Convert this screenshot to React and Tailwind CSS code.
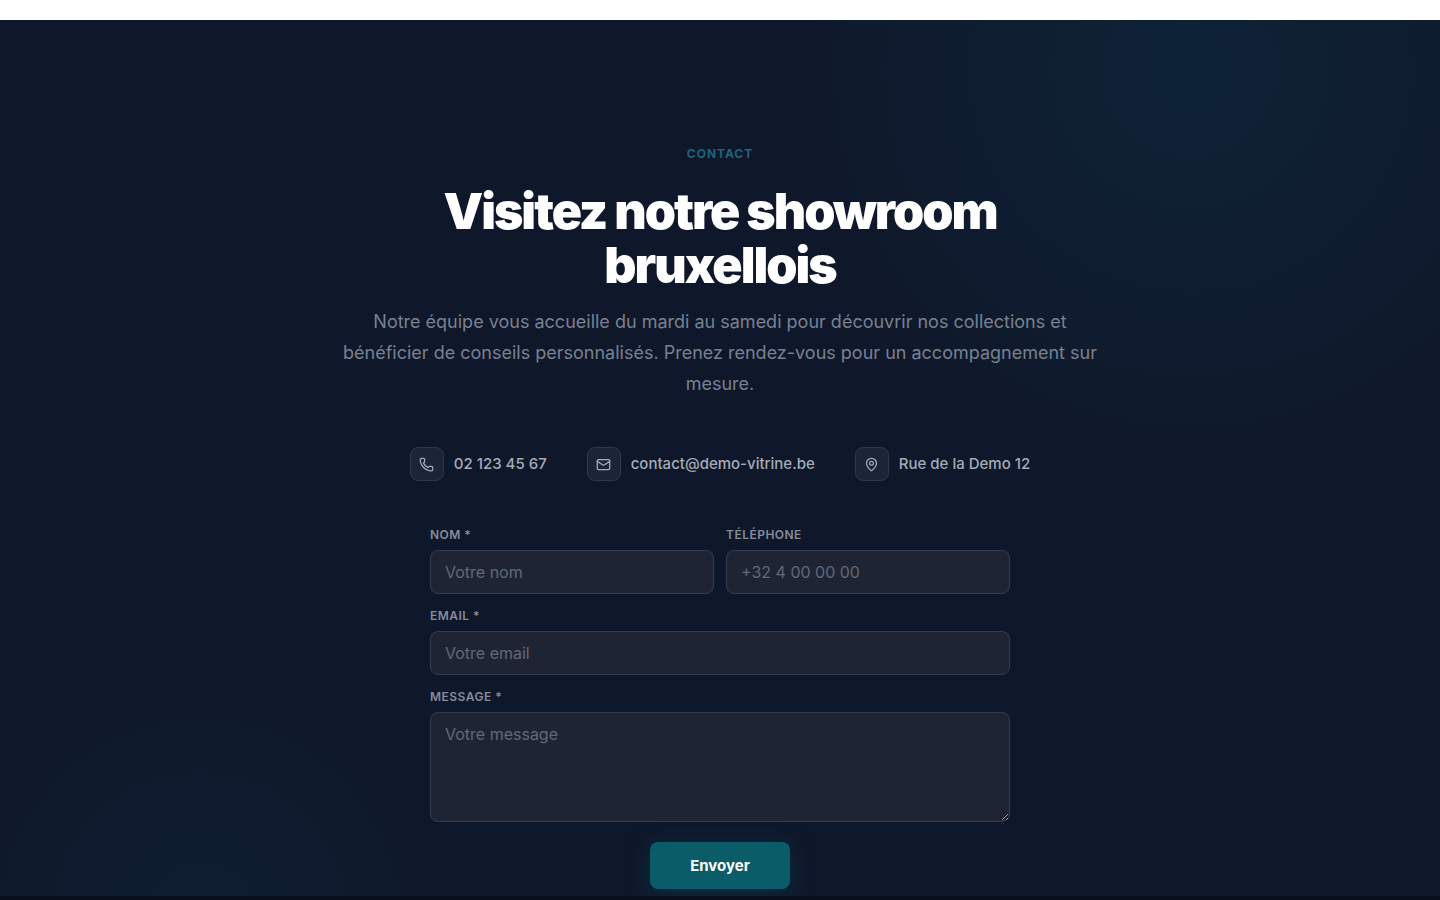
import React, { useState } from 'react';
import { Phone, Mail, MapPin } from 'lucide-react';

const contactItems = [
    { icon: Phone, label: '02 123 45 67', href: 'tel:021234567' },
    { icon: Mail, label: 'contact@demo-vitrine.be', href: 'mailto:contact@demo-vitrine.be' },
    { icon: MapPin, label: 'Rue de la Demo 12', href: '#adresse' },
];

const fieldClass =
    'block w-full rounded-lg border border-[#343d4d] bg-[#1f2435] px-3.5 text-base text-white placeholder:text-[#626877] outline-none focus:border-[#0b5c68]';

const Field = ({ id, label, children }) => (
    <div>
        <label htmlFor={id} className="block mb-1.5 text-xs leading-[19px] font-semibold tracking-[0.04em] uppercase text-[#868c99]">
            {label}
        </label>
        {children}
    </div>
);

const ContactForm = () => {
    const [form, setForm] = useState({ name: '', phone: '', email: '', message: '' });

    const handleChange = (e) => setForm({ ...form, [e.target.name]: e.target.value });

    return (
        <form onSubmit={(e) => e.preventDefault()} className="w-full max-w-[580px] mx-auto text-left">
            <div className="grid sm:grid-cols-2 gap-3">
                <Field id="name" label="Nom *">
                    <input id="name" name="name" type="text" required placeholder="Votre nom" value={form.name} onChange={handleChange} className={`${fieldClass} h-11`} />
                </Field>
                <Field id="phone" label="Téléphone">
                    <input id="phone" name="phone" type="tel" placeholder="+32 4 00 00 00" value={form.phone} onChange={handleChange} className={`${fieldClass} h-11`} />
                </Field>
                <div className="sm:col-span-2">
                    <Field id="email" label="Email *">
                        <input id="email" name="email" type="email" required placeholder="Votre email" value={form.email} onChange={handleChange} className={`${fieldClass} h-11`} />
                    </Field>
                </div>
                <div className="sm:col-span-2">
                    <Field id="message" label="Message *">
                        <textarea id="message" name="message" required placeholder="Votre message" value={form.message} onChange={handleChange} className={`${fieldClass} h-[110px] py-[9px] resize-y`} />
                    </Field>
                </div>
            </div>
            <div className="mt-5 flex justify-center">
                <button type="submit" className="px-10 pt-3 pb-[11px] rounded-lg bg-[#0a5c68] text-[15px] leading-6 font-bold text-white shadow-[0_4px_24px_rgba(8,95,115,0.35)]">
                    Envoyer
                </button>
            </div>
        </form>
    );
};

const App = () => {
    return (
        <div className="min-h-screen flex flex-col bg-white pt-5 font-['Inter',sans-serif]">
            <section
                id="contact"
                className="relative overflow-hidden bg-[#0f172a] px-6 pt-[124px] pb-[7px] text-center"
            >
                {/* Background glows */}
                <div className="absolute inset-0 pointer-events-none bg-[radial-gradient(circle_at_1190px_50px,rgba(14,90,110,0.18),transparent_430px),radial-gradient(circle_at_200px_900px,rgba(14,90,110,0.11),transparent_280px)]" />

                <div className="relative">
                    <div className="max-w-[760px] mx-auto">
                        <p className="text-xs leading-5 font-bold tracking-[0.08em] uppercase text-[#1f647e]">Contact</p>
                        <h2 className="mt-5 text-[50px] leading-[54px] font-black tracking-[-0.04em] text-white">
                            Visitez notre showroom bruxellois
                        </h2>
                        <p className="mt-3.5 text-lg leading-[31px] text-[#798190]">
                            Notre équipe vous accueille du mardi au samedi pour découvrir nos collections et bénéficier de conseils
                            personnalisés. Prenez rendez-vous pour un accompagnement sur mesure.
                        </p>
                    </div>

                    <div className="mt-12 mb-11 flex flex-wrap justify-center gap-10">
                        {contactItems.map(({ icon: Icon, label, href }) => (
                            <a key={label} href={href} className="flex items-center gap-2.5 text-[15px] font-medium text-[#a5abb7]">
                                <span className="w-[34px] h-[34px] rounded-lg border border-[#2f3848] bg-[#1c2537] flex items-center justify-center">
                                    <Icon size={15} strokeWidth={2} />
                                </span>
                                {label}
                            </a>
                        ))}
                    </div>

                    <ContactForm />
                </div>
            </section>
            <footer className="grow min-h-1 bg-[#0a0f1c]" />
        </div>
    );
};

export default App;
